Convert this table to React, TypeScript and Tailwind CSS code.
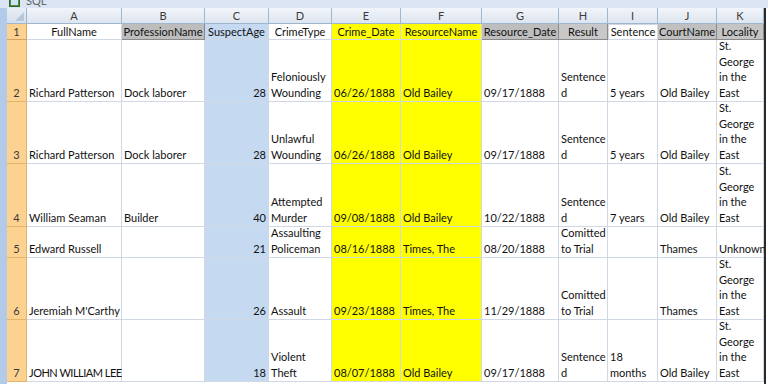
import React from "react";

const widths = [20, 95, 83, 64, 63, 69, 81, 77, 49, 50, 59, 47];
const letters = ["A", "B", "C", "D", "E", "F", "G", "H", "I", "J", "K"];

type Row = { n: string; h: string; cells: string[][] };

const george = ["St.", "George", "in the", "East"];

const rows: Row[] = [
  { n: "2", h: "h-[62px]", cells: [["Richard Patterson"], ["Dock laborer"], ["28"], ["Feloniously", "Wounding"], ["06/26/1888"], ["Old Bailey"], ["09/17/1888"], ["Sentence", "d"], ["5 years"], ["Old Bailey"], george] },
  { n: "3", h: "h-[62px]", cells: [["Richard Patterson"], ["Dock laborer"], ["28"], ["Unlawful", "Wounding"], ["06/26/1888"], ["Old Bailey"], ["09/17/1888"], ["Sentence", "d"], ["5 years"], ["Old Bailey"], george] },
  { n: "4", h: "h-[63px]", cells: [["William Seaman"], ["Builder"], ["40"], ["Attempted", "Murder"], ["09/08/1888"], ["Old Bailey"], ["10/22/1888"], ["Sentence", "d"], ["7 years"], ["Old Bailey"], george] },
  { n: "5", h: "h-[31px]", cells: [["Edward Russell"], [], ["21"], ["Assaulting", "Policeman"], ["08/16/1888"], ["Times, The"], ["08/20/1888"], ["Comitted", "to Trial"], [], ["Thames"], ["Unknown"]] },
  { n: "6", h: "h-[62px]", cells: [["Jeremiah M'Carthy"], [], ["26"], ["Assault"], ["09/23/1888"], ["Times, The"], ["11/29/1888"], ["Comitted", "to Trial"], [], ["Thames"], george] },
  { n: "7", h: "h-[62px]", cells: [["JOHN WILLIAM LEE"], [], ["18"], ["Violent", "Theft"], ["08/07/1888"], ["Old Bailey"], ["09/17/1888"], ["Sentence", "d"], ["18", "months"], ["Old Bailey"], george] },
];

const dataBg = (i: number) => {
  if (i === 2) return "bg-[#c5d9f1]";
  if (i === 4 || i === 5) return "bg-[#ffff00]";
  return "bg-white";
};

const headerCells: { t: string; cls: string }[] = [
  { t: "FullName", cls: "bg-white" },
  { t: "ProfessionName", cls: "bg-[#bdbdbd]" },
  { t: "SuspectAge", cls: "bg-[#c5d9f1]" },
  { t: "CrimeType", cls: "bg-white" },
  { t: "Crime_Date", cls: "bg-[#ffff00]" },
  { t: "ResourceName", cls: "bg-[#ffff00]" },
  { t: "Resource_Date", cls: "bg-[#bdbdbd]" },
  { t: "Result", cls: "bg-[#c8c8c8]" },
  { t: "Sentence", cls: "bg-white" },
  { t: "CourtName", cls: "bg-[#c0c0c0]" },
  { t: "Locality", cls: "bg-[#c4c4c4]" },
];

export default function App() {
  return (
    <div
      className="w-[768px] h-[384px] overflow-hidden bg-white text-[#111111] text-[11px]"
      style={{ fontFamily: "Lato, 'Open Sans', sans-serif" }}
    >
      {/* title strip */}
      <div className="h-[8px] overflow-hidden bg-[#dbe5f3] flex">
        <div className="flex items-center gap-[6px] pl-[9px] -mt-[7px] h-[16px]">
          <div className="w-[11px] h-[12px] bg-[#4f8f3c] border border-[#2f6a2a] relative">
            <div className="absolute left-[1px] top-[1px] w-[7px] h-[8px] bg-[#cfe3f7]" />
          </div>
          <span className="text-[#666] text-[11px]">SQL</span>
        </div>
      </div>
      <div className="flex">
        {/* left strip */}
        <div className="w-[7px] h-[376px] bg-[#b3cbe8] shrink-0" />
        <div className="flex flex-col">
          {/* column letter header */}
          <div className="flex h-[16px]">
            <div className="w-[20px] h-[16px] bg-gradient-to-b from-[#e9eef6] to-[#d5dfec] border-r border-b border-[#9eb6ce] relative shrink-0">
              <div className="absolute right-[2px] bottom-[2px] w-0 h-0 border-l-[9px] border-l-transparent border-b-[9px] border-b-[#b7c7da]" />
            </div>
            {letters.map((l, i) => (
              <div
                key={l}
                style={{ width: widths[i + 1] }}
                className="h-[16px] shrink-0 bg-gradient-to-b from-[#f2f5fa] to-[#dde5f0] border-r border-b border-[#9eb6ce] flex items-center justify-center text-[#3a3a3a] leading-none"
              >
                {l}
              </div>
            ))}
          </div>
          {/* row 1 */}
          <div className="flex h-[16px]">
            <div className="w-[20px] shrink-0 bg-[#fdd18f] border-r border-b border-[#d6a660] flex items-center justify-center leading-none text-[#3a3a3a]">
              1
            </div>
            {headerCells.map((c, i) => (
              <div
                key={c.t}
                style={{ width: widths[i + 1] }}
                className={`shrink-0 h-[16px] flex items-end justify-center whitespace-nowrap overflow-visible leading-[15px] border-r border-b ${
                  c.cls === "bg-white" || i === 4 || i === 5 || i === 2
                    ? "border-[#d0d7e5]"
                    : "border-[#8a8a8a]"
                } ${c.cls} ${i === 8 ? "border border-[#7a7a7a]" : ""}`}
              >
                {c.t}
              </div>
            ))}
          </div>
          {rows.map((r) => (
            <div key={r.n} className={`flex ${r.h}`}>
              <div className="w-[20px] shrink-0 bg-[#fdd18f] border-r border-b border-[#e2b56d] flex items-end justify-center leading-[15.5px] text-[#3a3a3a] pb-[1px]">
                {r.n}
              </div>
              {r.cells.map((lines, i) => (
                <div
                  key={i}
                  style={{ width: widths[i + 1] }}
                  className={`shrink-0 flex flex-col justify-end border-r border-b border-[#d0d7e5] leading-[15.5px] pb-[1px] whitespace-nowrap overflow-visible ${dataBg(i)} ${
                    i === 2 ? "items-end pr-[2px]" : "items-start pl-[2px]"
                  }`}
                >
                  {lines.map((t, k) => (
                    <span key={k} className={t === "JOHN WILLIAM LEE" ? "tracking-[-0.5px]" : ""}>
                      {t}
                    </span>
                  ))}
                </div>
              ))}
            </div>
          ))}
        </div>
        {/* right dark line */}
        <div className="w-[2px] h-[376px] bg-[#2a2a2a] shrink-0" />
        <div className="flex-1 h-[376px] bg-white" />
      </div>
    </div>
  );
}
